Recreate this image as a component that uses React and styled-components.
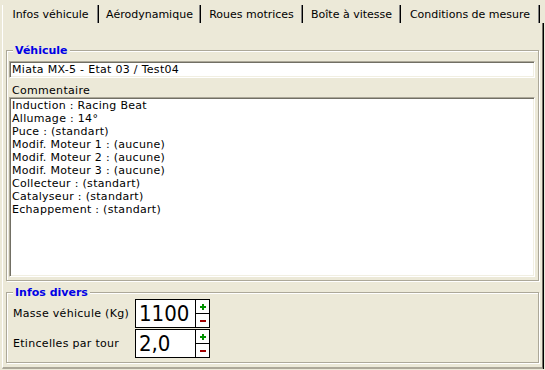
import React from 'react';
import styled, { createGlobalStyle } from 'styled-components';

const GlobalStyle = createGlobalStyle`
    html, body {
        margin: 0;
        padding: 0;
        background: #ECE9D8;
    }
    #root {
        width: 545px;
        height: 370px;
        overflow: hidden;
        font-family: "DejaVu Sans", Verdana, sans-serif;
        font-size: 11px;
        color: #000;
    }
`;

const tabs = [
    { label: 'Infos véhicule', width: 97 },
    { label: 'Aérodynamique', width: 102 },
    { label: 'Roues motrices', width: 102 },
    { label: 'Boîte à vitesse', width: 98 },
    { label: 'Conditions de mesure', width: 139 },
];

const comment = [
    'Induction : Racing Beat',
    'Allumage : 14°',
    'Puce : (standart)',
    'Modif. Moteur 1 : (aucune)',
    'Modif. Moteur 2 : (aucune)',
    'Modif. Moteur 3 : (aucune)',
    'Collecteur : (standart)',
    'Catalyseur : (standart)',
    'Echappement : (standart)',
].join('\n');

const fields = [
    { label: 'Masse véhicule (Kg)', value: '1100' },
    { label: 'Etincelles par tour', value: '2,0' },
];

const Plus = () => (
    <svg width="6" height="6" viewBox="0 0 6 6">
        <rect x="0" y="2" width="6" height="2" fill="#009100" />
        <rect x="2" y="0" width="2" height="6" fill="#009100" />
    </svg>
);

const Minus = () => (
    <svg width="6" height="2" viewBox="0 0 6 2">
        <rect x="0" y="0" width="6" height="2" fill="#a00000" />
    </svg>
);

const App = () => {
    return (
        <Window>
            <GlobalStyle />
            <TabBar>
                {tabs.map((t, i) => (
                    <Tab key={t.label} $w={t.width} $active={i === 0}>
                        {t.label}
                    </Tab>
                ))}
            </TabBar>
            <Panel>
                <Group>
                    <Caption>Véhicule</Caption>
                    <TextInput type="text" defaultValue="Miata MX-5 - Etat 03 / Test04" />
                    <FieldLabel>Commentaire</FieldLabel>
                    <Memo readOnly value={comment} />
                </Group>
                <Group $gap>
                    <Caption>Infos divers</Caption>
                    <Rows>
                        {fields.map((f) => (
                            <Row key={f.label}>
                                <span>{f.label}</span>
                                <NumBox>
                                    <NumValue>{f.value}</NumValue>
                                    <Spinner>
                                        <SpinButton><Plus /></SpinButton>
                                        <SpinButton $bottom><Minus /></SpinButton>
                                    </Spinner>
                                </NumBox>
                            </Row>
                        ))}
                    </Rows>
                </Group>
            </Panel>
        </Window>
    );
};

const Window = styled.div`
    width: 545px;
    height: 370px;
    display: flex;
    flex-direction: column;
`;

const TabBar = styled.div`
    display: flex;
    align-items: flex-end;
    height: 23px;
    padding-left: 2px;
`;

const Tab = styled.div`
    box-sizing: border-box;
    width: ${(p) => p.$w}px;
    height: 18px;
    line-height: 20px;
    text-align: center;
    white-space: nowrap;
    border-right: 1px solid #000;
    border-left: ${(p) => (p.$active ? '1px solid #fff' : '0')};
    box-shadow: inset -1px 0 #808080;
`;

const Panel = styled.div`
    box-sizing: border-box;
    width: 541px;
    margin-left: 2px;
    padding: 27px 3px 4px 3px;
    border-left: 1px solid #fff;
    border-right: 1px solid #716F64;
    border-bottom: 2px solid #ACA899;
    box-shadow: 1px 0 0 #000;
`;

const Group = styled.div`
    display: flex;
    flex-direction: column;
    margin-top: ${(p) => (p.$gap ? '11px' : '0')};
    padding: 0 3px ${(p) => (p.$gap ? '4px' : '3px')} 2px;
    border: 1px solid #ACA899;
    box-shadow: inset 1px 1px #fff, 1px 1px #fff;
`;

const Caption = styled.div`
    align-self: flex-start;
    margin: -7px 0 0 4px;
    padding: 0 2px;
    line-height: 13px;
    font-weight: bold;
    color: #0000e6;
    background: #ECE9D8;
`;

const sunken = `
    box-sizing: border-box;
    width: 100%;
    margin: 0;
    border: 1px solid;
    border-color: #ACA899 #fff #fff #ACA899;
    box-shadow: inset 1px 1px #716F64, inset -1px -1px #F1EFE2;
    background: #fff;
    font-family: "DejaVu Sans", Verdana, sans-serif;
    font-size: 11px;
    letter-spacing: 0.3px;
    color: #000;
    outline: none;
`;

const TextInput = styled.input`
    ${sunken}
    height: 17px;
    margin-top: 4px;
    padding: 0 2px;
`;

const FieldLabel = styled.div`
    margin-top: 6px;
    padding-left: 3px;
    line-height: 13px;
    letter-spacing: 0.3px;
`;

const Memo = styled.textarea`
    ${sunken}
    display: block;
    height: 180px;
    padding: 1px 2px;
    line-height: 13px;
    resize: none;
    overflow: hidden;
`;

const Rows = styled.div`
    display: flex;
    flex-direction: column;
    gap: 1px;
`;

const Row = styled.div`
    display: grid;
    grid-template-columns: 122px auto;
    align-items: center;
    padding-left: 4px;
    letter-spacing: 0.3px;
`;

const NumBox = styled.div`
    box-sizing: border-box;
    display: flex;
    width: 75px;
    height: 29px;
    border: 1px solid #000;
    background: #fff;
`;

const NumValue = styled.div`
    flex: 1;
    padding-left: 3px;
    font-family: "DejaVu Sans Condensed", "DejaVu Sans", sans-serif;
    font-size: 22px;
    line-height: 27px;
    letter-spacing: 0;
`;

const Spinner = styled.div`
    display: flex;
    flex-direction: column;
    width: 13px;
    border-left: 1px solid #000;
`;

const SpinButton = styled.div`
    flex: 1;
    display: flex;
    align-items: center;
    justify-content: center;
    border-top: ${(p) => (p.$bottom ? '1px solid #000' : '0')};
`;

export default App;
